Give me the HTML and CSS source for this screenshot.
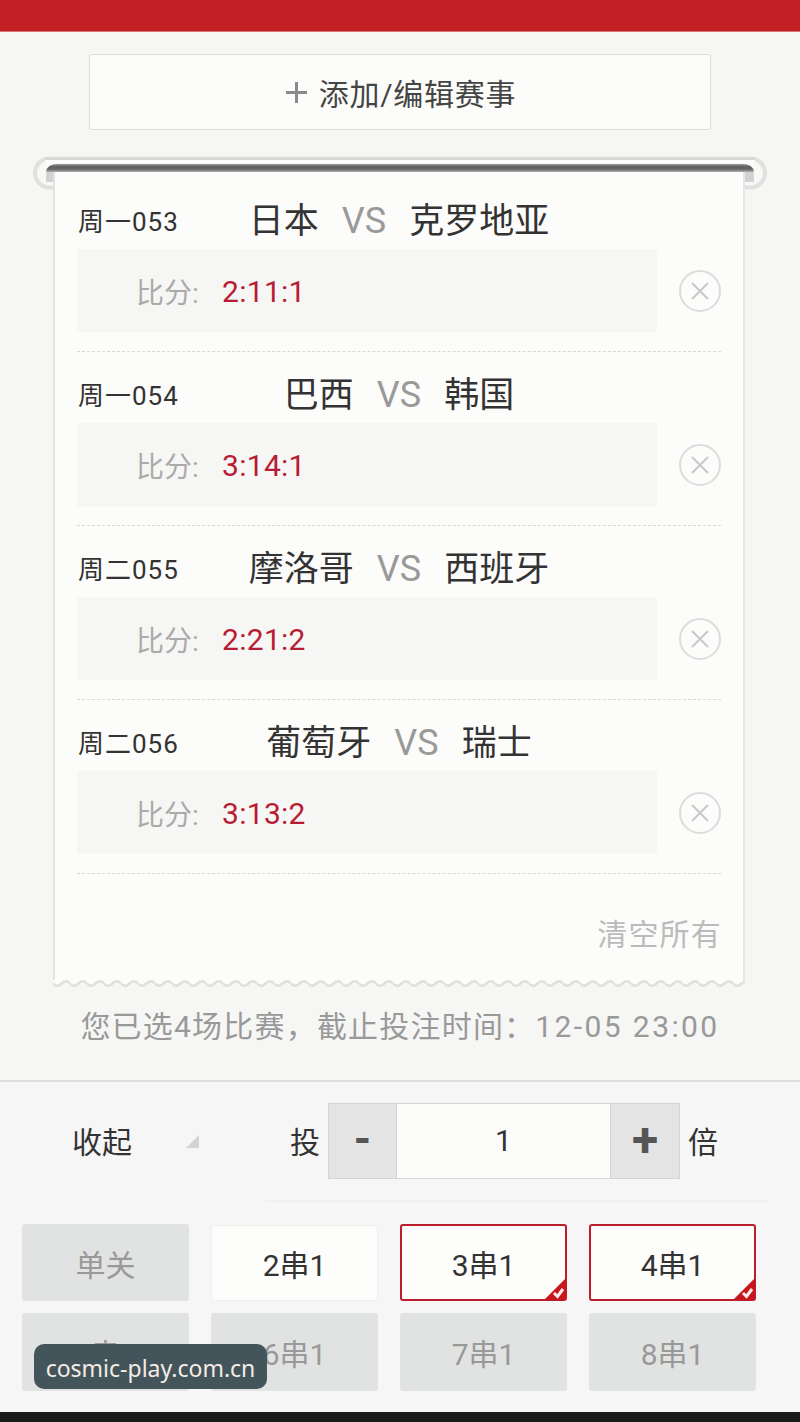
FILE: index.html
```html
<!DOCTYPE html>
<html lang="zh-CN">
<head>
  <meta charset="UTF-8">
  <title>投注确认</title>
  <meta name="viewport" content="width=device-width, initial-scale=1">
  <link rel="stylesheet" href="styles.css">
</head>
<body>

  <header class="topbar"></header>

  <button class="add-btn">
    <svg class="add-plus" width="21" height="21" viewBox="0 0 21 21"><path d="M10.5 0 V21 M0 10.5 H21" stroke="#8a8a8a" stroke-width="3" fill="none"/></svg>
    添加/编辑赛事
  </button>

  <div class="ticket">
    <svg class="roller" width="738" height="36" viewBox="0 0 738 36">
      <defs>
        <linearGradient id="band" x1="0" y1="0" x2="0" y2="1">
          <stop offset="0" stop-color="#9a9a9a"/>
          <stop offset="0.35" stop-color="#5c5c5c"/>
          <stop offset="0.7" stop-color="#6e6e6e"/>
          <stop offset="1" stop-color="#b4b4b4"/>
        </linearGradient>
      </defs>
      <rect x="4" y="2.5" width="730" height="29" rx="14.5" fill="#f8f8f7" stroke="#e0e0df" stroke-width="4"/>
      <rect x="14" y="2" width="710" height="1.5" fill="#d2d2d2"/>
      <rect x="14" y="4" width="710" height="3" fill="#fdfdfc"/>
      <path d="M15 26 V20 Q15 8 27 8 H711 Q723 8 723 20 V26 Z" fill="#d2d2d2"/>
      <path d="M15 16 Q16 8 27 8 H711 Q722 8 723 16 Z" fill="url(#band)"/>
    </svg>

    <div class="paper">
      <div class="match">
        <div class="match-head">
          <span class="match-no">周一053</span>
          <span class="teams">日本<em>VS</em>克罗地亚</span>
        </div>
        <div class="match-body">
          <div class="score-box"><span class="score-label">比分:</span><span class="score-val">2:11:1</span></div>
          <svg class="close-icon" width="42" height="42" viewBox="0 0 42 42"><circle cx="21" cy="21" r="20" fill="none" stroke="#dcdcdc" stroke-width="2"/><path d="M13 13 L29 29 M29 13 L13 29" stroke="#c8c8c8" stroke-width="2" fill="none"/></svg>
        </div>
      </div>

      <div class="match">
        <div class="match-head">
          <span class="match-no">周一054</span>
          <span class="teams">巴西<em>VS</em>韩国</span>
        </div>
        <div class="match-body">
          <div class="score-box"><span class="score-label">比分:</span><span class="score-val">3:14:1</span></div>
          <svg class="close-icon" width="42" height="42" viewBox="0 0 42 42"><circle cx="21" cy="21" r="20" fill="none" stroke="#dcdcdc" stroke-width="2"/><path d="M13 13 L29 29 M29 13 L13 29" stroke="#c8c8c8" stroke-width="2" fill="none"/></svg>
        </div>
      </div>

      <div class="match">
        <div class="match-head">
          <span class="match-no">周二055</span>
          <span class="teams">摩洛哥<em>VS</em>西班牙</span>
        </div>
        <div class="match-body">
          <div class="score-box"><span class="score-label">比分:</span><span class="score-val">2:21:2</span></div>
          <svg class="close-icon" width="42" height="42" viewBox="0 0 42 42"><circle cx="21" cy="21" r="20" fill="none" stroke="#dcdcdc" stroke-width="2"/><path d="M13 13 L29 29 M29 13 L13 29" stroke="#c8c8c8" stroke-width="2" fill="none"/></svg>
        </div>
      </div>

      <div class="match">
        <div class="match-head">
          <span class="match-no">周二056</span>
          <span class="teams">葡萄牙<em>VS</em>瑞士</span>
        </div>
        <div class="match-body">
          <div class="score-box"><span class="score-label">比分:</span><span class="score-val">3:13:2</span></div>
          <svg class="close-icon" width="42" height="42" viewBox="0 0 42 42"><circle cx="21" cy="21" r="20" fill="none" stroke="#dcdcdc" stroke-width="2"/><path d="M13 13 L29 29 M29 13 L13 29" stroke="#c8c8c8" stroke-width="2" fill="none"/></svg>
        </div>
      </div>

      <div class="clear-all">清空所有</div>
    </div>

    <svg class="paper-edge" width="692" height="8" viewBox="0 0 692 8">
      <defs>
        <pattern id="wave" width="17" height="8" patternUnits="userSpaceOnUse">
          <path d="M0 2.5 Q4 7 8.5 2.5 T17 2.5 V0 H0 Z" fill="#fcfcfa"/>
          <path d="M0 3.5 Q4 8 8.5 3.5 T17 3.5" fill="none" stroke="#dfdfdd" stroke-width="2.5"/>
        </pattern>
      </defs>
      <rect width="692" height="8" fill="url(#wave)"/>
    </svg>
  </div>

  <p class="summary">您已选4场比赛，截止投注时间：<span class="summary-time">12-05 23:00</span></p>

  <section class="panel">
    <div class="stake-row">
      <span class="collapse">收起</span>
      <span class="collapse-arrow"></span>
      <span class="stake-label">投</span>
      <div class="stepper">
        <span class="step-btn step-minus">-</span>
        <span class="step-val">1</span>
        <span class="step-btn step-plus">+</span>
      </div>
      <span class="stake-unit">倍</span>
    </div>
    <div class="panel-line"></div>
    <div class="pass-grid">
      <div class="pass off">单关</div>
      <div class="pass plain">2串1</div>
      <div class="pass on">3串1
        <svg class="tick" width="22" height="22" viewBox="0 0 22 22"><path d="M22 0 V18 Q22 22 18 22 H0 Z" fill="#c8161d"/><path d="M10 15 L13.5 18.5 L19 11" fill="none" stroke="#fdeeee" stroke-width="3"/></svg>
      </div>
      <div class="pass on">4串1
        <svg class="tick" width="22" height="22" viewBox="0 0 22 22"><path d="M22 0 V18 Q22 22 18 22 H0 Z" fill="#c8161d"/><path d="M10 15 L13.5 18.5 L19 11" fill="none" stroke="#fdeeee" stroke-width="3"/></svg>
      </div>
      <div class="pass off">5串1</div>
      <div class="pass off">6串1</div>
      <div class="pass off">7串1</div>
      <div class="pass off">8串1</div>
    </div>
  </section>

  <div class="bottom-bar"></div>

  <div class="watermark">cosmic-play.com.cn</div>

</body>
</html>
```

FILE: styles.css
```css
html, body {
  margin: 0;
  padding: 0;
}

body {
  position: relative;
  width: 800px;
  height: 1422px;
  overflow: hidden;
  display: flex;
  flex-direction: column;
  font-family: Roboto, "Noto Sans CJK SC", sans-serif;
  background: #f6f6f5;
  color: #333;
}

.topbar {
  height: 31px;
  background: #c22024;
  border-bottom: 1px solid #d6777a;
}

.add-btn {
  display: flex;
  align-items: center;
  justify-content: center;
  gap: 12px;
  width: 622px;
  height: 76px;
  margin: 22px 0 0 89px;
  padding: 0 0 0 2px;
  font-family: inherit;
  font-size: 30px;
  letter-spacing: 0.7px;
  color: #444;
  background: #fcfcfa;
  border: 1px solid #dcdcdc;
  border-radius: 2px;
}

/* ticket with the roller on top */
.ticket {
  position: relative;
  width: 738px;
  margin: 26px 0 0 31px;
  padding-top: 16px;
}

.roller {
  position: absolute;
  left: 0;
  top: 0;
}

.paper {
  position: relative;
  box-sizing: border-box;
  width: 692px;
  height: 808px;
  margin-left: 22px;
  padding: 6px 22px 0;
  background: #fcfcfa;
  border-left: 2px solid #e2e2e2;
  border-right: 2px solid #e6e6e6;
}

.paper-edge {
  display: block;
  margin-left: 22px;
}

.match {
  padding: 25px 0 19px;
  border-bottom: 1px dashed #d8d8d8;
}

.match-head {
  display: grid;
  grid-template-columns: 1fr auto 1fr;
  align-items: center;
  height: 36px;
  margin-bottom: 10px;
  line-height: 36px;
}

.match-no {
  font-size: 26px;
  letter-spacing: 1px;
  margin-left: 1px;
}

.teams {
  font-size: 35px;
  color: #333;
  white-space: nowrap;
}

.teams em {
  font-style: normal;
  font-size: 36px;
  color: #999;
  margin: 0 23px;
}

.match-body {
  display: flex;
  justify-content: space-between;
  align-items: center;
}

.close-icon {
  margin-top: 1px;
}

.score-box {
  box-sizing: border-box;
  width: 580px;
  height: 83px;
  padding: 1px 0 0 59px;
  display: flex;
  align-items: center;
  background: #f6f6f4;
}

.score-label {
  width: 86px;
  font-size: 28px;
  color: #aaa;
}

.score-val {
  font-size: 30px;
  letter-spacing: 0.3px;
  color: #b81c33;
}

.clear-all {
  margin: 43px -1px 0 0;
  text-align: right;
  font-size: 30px;
  letter-spacing: 1.2px;
  line-height: 36px;
  color: #bbb;
}

.summary {
  margin: 19px 0 0;
  text-align: center;
  font-size: 30px;
  letter-spacing: 1.2px;
  line-height: 40px;
  color: #999;
}

.summary-time {
  letter-spacing: 2.4px;
}

/* bottom panel */
.panel {
  flex: 1;
  margin-top: 33px;
  background: #f7f6f6;
  border-top: 2px solid #dedede;
}

.stake-row {
  display: flex;
  align-items: center;
  height: 76px;
  margin-top: 21px;
  padding-left: 72px;
  font-size: 30px;
}

.collapse {
  width: 114px;
  margin-bottom: 2px;
}

.collapse-arrow {
  width: 0;
  height: 0;
  border-style: solid;
  border-width: 0 0 13px 13px;
  border-color: transparent transparent #d4d4d4 transparent;
  margin-right: 91px;
}

.stake-label, .stake-unit {
  margin-bottom: 2px;
}

.stepper {
  display: flex;
  width: 352px;
  height: 76px;
  margin: 0 8px;
  background: #fcfcfa;
  border-top: 1px solid #d4d4d4;
  border-bottom: 1px solid #d4d4d4;
  box-sizing: border-box;
  border-radius: 2px;
}

.step-btn {
  width: 69px;
  box-sizing: border-box;
  display: flex;
  align-items: center;
  justify-content: center;
  background: #e4e4e4;
  border: 1px solid #d4d4d4;
  margin: -1px 0;
  padding-bottom: 4px;
  color: #555;
  font-weight: 700;
}

.step-minus {
  font-size: 44px;
}

.step-plus {
  width: 70px;
  font-size: 48px;
}

.step-val {
  flex: 1;
  text-align: center;
  line-height: 74px;
  font-size: 30px;
}

.panel-line {
  height: 2px;
  margin: 21px 32px 0 265px;
  background: #f1f0f0;
}

.pass-grid {
  display: grid;
  grid-template-columns: repeat(4, 1fr);
  grid-template-rows: 77px 78px;
  gap: 12px 22px;
  margin: 22px 44px 0 22px;
}

.pass {
  position: relative;
  display: flex;
  align-items: center;
  justify-content: center;
  font-size: 30px;
  color: #333;
  border-radius: 3px;
}

.pass.plain {
  background: #fdfdfc;
  border: 1px solid #efefed;
  margin: 1px 0 0;
}

.pass.off {
  background: #e1e3e2;
  color: #999;
}

.pass.on {
  background: #fdfdfc;
  border: 2px solid #bb1d2c;
}

.tick {
  position: absolute;
  right: -1px;
  bottom: -1px;
}

.bottom-bar {
  height: 10px;
  background: #1a1a1a;
}

.watermark {
  position: absolute;
  left: 34px;
  top: 1344px;
  width: 233px;
  height: 45px;
  line-height: 49px;
  text-align: center;
  font-family: "Noto Sans", sans-serif;
  font-size: 23px;
  color: #f5ece6;
  background: #43555a;
  border-radius: 10px;
}
```
